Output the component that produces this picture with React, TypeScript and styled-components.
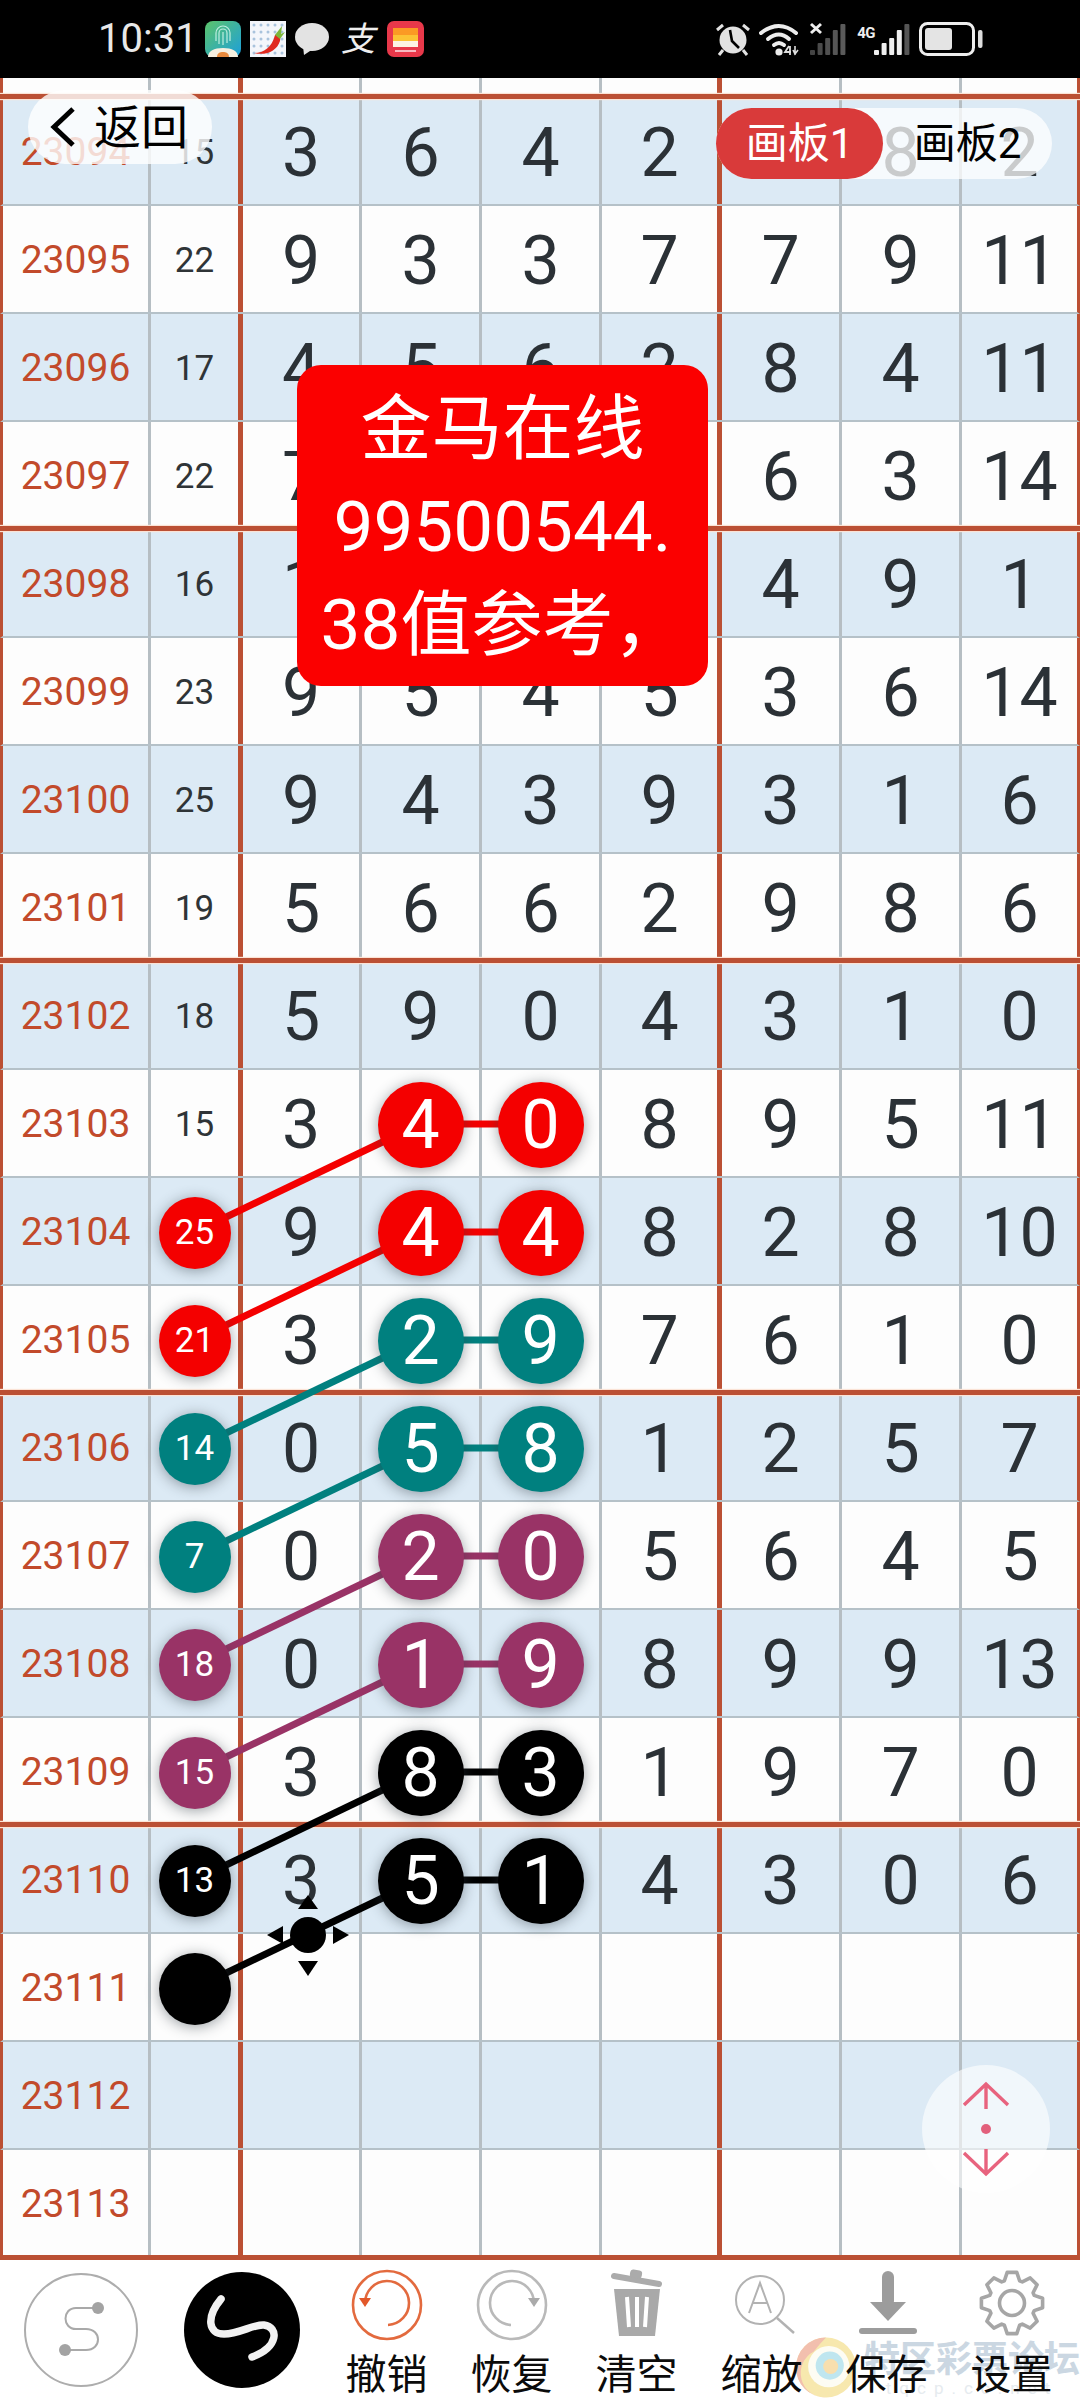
import React from 'react';
import styled, { createGlobalStyle } from 'styled-components';

const FONT = `Roboto, "Noto Sans CJK SC", sans-serif`;
const THICK = '#bb5034';
const THIN = '#b6bec3';
const TONES = { red: '#f40000', teal: '#00807f', purple: '#993366', black: '#000000' } as const;
type Tone = keyof typeof TONES;

const Global = createGlobalStyle`
  html, body { margin: 0; padding: 0; background: #fff; }
  body { font-family: ${FONT}; }
  * { box-sizing: border-box; }
`;

const Page = styled.div`
  position: relative;
  width: 1080px;
  height: 2400px;
  overflow: hidden;
  background: #fff;
`;

/* status bar */
const StatusBar = styled.div`
  height: 78px;
  background: #000;
  display: flex;
  align-items: center;
  padding: 0 97px 0 98px;
`;
const Time = styled.span`
  font-size: 40px;
  color: #e8e8e8;
  width: 107px;
  line-height: 1;
  white-space: nowrap;
`;
const NotifyGroup = styled.div`
  display: flex;
  align-items: center;
  gap: 9px;
`;
const SystemGroup = styled.div`
  display: flex;
  align-items: center;
  gap: 8px;
  margin-left: auto;
`;
const AliGlyph = styled.span`
  width: 36px;
  margin: 0 2px;
  font-size: 34px;
  line-height: 1;
  color: #eee;
  text-align: center;
  font-style: italic;
`;
const NetLabel = styled.span`
  align-self: flex-start;
  margin: 4px -10px 0 2px;
  font-size: 15px;
  font-weight: 700;
  line-height: 1;
  color: #eee;
  letter-spacing: -0.5px;
`;

/* grid */
const Board = styled.div`
  position: relative;
  width: 1080px;
`;
const Row = styled.div<{ $blue?: boolean; $thick?: boolean; $last?: boolean; $stub?: boolean }>`
  position: relative;
  display: grid;
  grid-template-columns: 148px 92px 119px 120px 120px 120px 120px 120px 115px;
  height: ${(p) => (p.$stub ? 20 : p.$last ? 110 : 108)}px;
  background: ${(p) => (p.$blue ? '#dceaf5' : '#fdfdfd')};
  border-left: 3px solid ${THICK};
  border-right: 3px solid ${THICK};
  border-bottom: ${(p) => (p.$last ? `5px solid ${THICK}` : p.$stub ? 'none' : `2px solid #b5c1c8`)};
  &::before {
    content: '';
    display: ${(p) => (p.$thick ? 'block' : 'none')};
    position: absolute;
    left: -3px;
    right: -3px;
    top: -4px;
    height: 5px;
    background: ${THICK};
    box-shadow: 0 1px 1px #fbe3d6, 0 -1px 1px #fbe3d6;
  }
`;
const Cell = styled.div<{ $edge?: 'thin' | 'thick' | 'none' }>`
  display: flex;
  align-items: center;
  justify-content: center;
  padding-top: 3px;
  min-width: 0;
  border-right: ${(p) =>
    p.$edge === 'thick' ? `5px solid ${THICK}` : p.$edge === 'none' ? 'none' : `3px solid ${THIN}`};
`;
const RowId = styled.span`
  font-size: 39px;
  line-height: 1;
  color: #c24a2b;
`;
const SumText = styled.span`
  font-size: 35px;
  line-height: 1;
  color: #2f3437;
`;
const Digit = styled.span`
  font-size: 68px;
  line-height: 1;
  color: #2b3136;
`;
const Ball = styled.span<{ $tone: Tone; $small?: boolean }>`
  position: relative;
  z-index: 2;
  flex: none;
  display: flex;
  align-items: center;
  justify-content: center;
  width: ${(p) => (p.$small ? 72 : 86)}px;
  height: ${(p) => (p.$small ? 72 : 86)}px;
  border-radius: 50%;
  background: ${(p) => TONES[p.$tone]};
  color: #fff;
  font-size: ${(p) => (p.$small ? 35 : 68)}px;
  line-height: 1;
  box-shadow: 0 2px 14px rgba(50, 60, 70, 0.48);
`;
const LinkLayer = styled.svg`
  position: absolute;
  left: 0;
  top: 0;
  z-index: 1;
  pointer-events: none;
`;

/* floating controls */
const BackPill = styled.div`
  position: absolute;
  left: 28px;
  top: 90px;
  width: 184px;
  height: 74px;
  z-index: 4;
  display: flex;
  align-items: center;
  gap: 18px;
  padding-left: 22px;
  border-radius: 37px;
  background: rgba(255, 255, 255, 0.8);
  color: #000;
  font-size: 47px;
  line-height: 1;
`;
const BoardTabs = styled.div`
  position: absolute;
  left: 716px;
  top: 108px;
  width: 336px;
  height: 71px;
  z-index: 4;
  display: flex;
  border-radius: 36px;
  background: rgba(255, 255, 255, 0.75);
`;
const BoardTab = styled.div<{ $active?: boolean }>`
  flex: ${(p) => (p.$active ? '0 0 167px' : '1')};
  display: flex;
  align-items: center;
  justify-content: center;
  border-radius: 36px;
  font-size: 42px;
  line-height: 1;
  color: ${(p) => (p.$active ? '#fff' : '#000')};
  background: ${(p) => (p.$active ? '#d93a3a' : 'transparent')};
`;
const NoteCard = styled.div`
  position: absolute;
  left: 297px;
  top: 365px;
  width: 411px;
  height: 321px;
  z-index: 5;
  display: flex;
  flex-direction: column;
  align-items: center;
  justify-content: center;
  padding-top: 3px;
  border-radius: 24px;
  background: #fb0000;
  color: #fff;
  font-size: 71px;
  line-height: 98px;
  white-space: nowrap;
`;
const ScrollKnob = styled.div`
  position: absolute;
  left: 922px;
  top: 2065px;
  width: 128px;
  height: 128px;
  z-index: 4;
  display: flex;
  align-items: center;
  justify-content: center;
  border-radius: 50%;
  background: rgba(255, 255, 255, 0.6);
`;

/* toolbar */
const Toolbar = styled.div`
  height: 140px;
  background: #fff;
  display: flex;
  align-items: flex-start;
  padding-left: 24px;
`;
const RoundButton = styled.div<{ $dark?: boolean }>`
  flex: none;
  align-self: center;
  width: ${(p) => (p.$dark ? 116 : 114)}px;
  height: ${(p) => (p.$dark ? 116 : 114)}px;
  margin-left: ${(p) => (p.$dark ? 46 : 0)}px;
  margin-right: ${(p) => (p.$dark ? 24 : 0)}px;
  border-radius: 50%;
  background: ${(p) => (p.$dark ? '#000' : 'transparent')};
  border: ${(p) => (p.$dark ? 'none' : '2px solid #adadad')};
`;
const ToolItem = styled.div`
  position: relative;
  z-index: 2;
  flex: none;
  width: 125px;
  display: flex;
  flex-direction: column;
  align-items: center;
  gap: 9px;
  padding-top: 5px;
`;
const ToolIcon = styled.svg`
  display: block;
  width: 80px;
  height: 80px;
`;
const ToolLabel = styled.span`
  font-size: 41px;
  line-height: 42px;
  color: #0b0b0b;
`;
const Watermark = styled.div`
  position: absolute;
  left: 795px;
  top: 2335px;
  width: 285px;
  height: 65px;
  z-index: 1;
  display: flex;
  overflow: hidden;
`;
const WatermarkText = styled.div`
  margin-left: 7px;
  padding-top: 6px;
  white-space: nowrap;
  display: flex;
  flex-direction: column;
  align-items: center;
`;
const WatermarkTitle = styled.span`
  font-size: 36px;
  line-height: 38px;
  font-weight: 700;
  color: #cbd7e2;
`;
const WatermarkUrl = styled.span`
  font-size: 17px;
  line-height: 18px;
  letter-spacing: 8px;
  color: #e6ebef;
`;

type RowData = {
  id: number;
  sum?: number;
  sumTone?: Tone;
  tone?: Tone;
  nums?: number[];
};

const ROWS: RowData[] = [
  { id: 23094, sum: 15, nums: [3, 6, 4, 2, 7, 8, 2] },
  { id: 23095, sum: 22, nums: [9, 3, 3, 7, 7, 9, 11] },
  { id: 23096, sum: 17, nums: [4, 5, 6, 2, 8, 4, 11] },
  { id: 23097, sum: 22, nums: [7, 4, 6, 5, 6, 3, 14] },
  { id: 23098, sum: 16, nums: [1, 7, 3, 5, 4, 9, 1] },
  { id: 23099, sum: 23, nums: [9, 5, 4, 5, 3, 6, 14] },
  { id: 23100, sum: 25, nums: [9, 4, 3, 9, 3, 1, 6] },
  { id: 23101, sum: 19, nums: [5, 6, 6, 2, 9, 8, 6] },
  { id: 23102, sum: 18, nums: [5, 9, 0, 4, 3, 1, 0] },
  { id: 23103, sum: 15, tone: 'red', nums: [3, 4, 0, 8, 9, 5, 11] },
  { id: 23104, sum: 25, sumTone: 'red', tone: 'red', nums: [9, 4, 4, 8, 2, 8, 10] },
  { id: 23105, sum: 21, sumTone: 'red', tone: 'teal', nums: [3, 2, 9, 7, 6, 1, 0] },
  { id: 23106, sum: 14, sumTone: 'teal', tone: 'teal', nums: [0, 5, 8, 1, 2, 5, 7] },
  { id: 23107, sum: 7, sumTone: 'teal', tone: 'purple', nums: [0, 2, 0, 5, 6, 4, 5] },
  { id: 23108, sum: 18, sumTone: 'purple', tone: 'purple', nums: [0, 1, 9, 8, 9, 9, 13] },
  { id: 23109, sum: 15, sumTone: 'purple', tone: 'black', nums: [3, 8, 3, 1, 9, 7, 0] },
  { id: 23110, sum: 13, sumTone: 'black', tone: 'black', nums: [3, 5, 1, 4, 3, 0, 6] },
  { id: 23111, sumTone: 'black' },
  { id: 23112 },
  { id: 23113 },
];

const rowY = (i: number) => 20 + 108 * i + 54;
const SUM_X = 195;
const FIRST_X = 420;
const SECOND_X = 541;

function gearPath(cx: number, cy: number, outer: number, root: number, teeth: number) {
  const pts: string[] = [];
  const step = (Math.PI * 2) / teeth;
  for (let k = 0; k < teeth; k++) {
    const a = k * step - Math.PI / 2;
    const seq: [number, number][] = [
      [root, a - step * 0.42],
      [outer, a - step * 0.2],
      [outer, a + step * 0.2],
      [root, a + step * 0.42],
    ];
    seq.forEach(([r, t]) => {
      pts.push(`${(cx + r * Math.cos(t)).toFixed(1)} ${(cy + r * Math.sin(t)).toFixed(1)}`);
    });
  }
  return `M${pts.join('L')}Z`;
}

const FingerprintApp = () => (
  <svg width="36" height="36" viewBox="0 0 36 36">
    <defs>
      <linearGradient id="fpa" x1="0" y1="0" x2="1" y2="1">
        <stop offset="0" stopColor="#5cc46a" />
        <stop offset="1" stopColor="#1c9fdc" />
      </linearGradient>
    </defs>
    <rect width="36" height="36" rx="8" fill="url(#fpa)" />
    <g fill="none" stroke="#bfeee0" strokeWidth="1.2">
      <path d="M11 20V12a7 7 0 0 1 14 0v8" />
      <path d="M14 23V12a4 4 0 0 1 8 0v10" />
      <path d="M18 11v13" />
    </g>
    <path d="M3 36c0-6 6-9 15-9s15 3 15 9z" fill="#f6efe0" />
    <path d="M12 36c0-4 3-5 6-5s6 1 6 5z" fill="#e8893c" />
  </svg>
);

const ChiliApp = () => (
  <svg width="36" height="36" viewBox="0 0 36 36">
    <rect width="36" height="36" fill="#f4f6fb" />
    {[4, 11, 18, 25, 32].map((x) =>
      [4, 11, 18, 25, 32].map((y) => <circle key={`${x}-${y}`} cx={x} cy={y} r="1.5" fill="#a9c3dd" />),
    )}
    <path d="M4 32c10 0 18-6 21-18 3-1 6 2 5 6-3 10-14 15-26 12z" fill="#e0291f" />
    <path d="M25 14l7-9-1 8 4-2-5 7z" fill="#7db63a" />
  </svg>
);

const ChatBubble = () => (
  <svg width="34" height="34" viewBox="0 0 34 34">
    <ellipse cx="17" cy="15" rx="17" ry="14" fill="#e3e3e3" />
    <path d="M8 24l1 9 9-6z" fill="#e3e3e3" />
  </svg>
);

const HuaweiApp = () => (
  <svg width="37" height="36" viewBox="0 0 37 36">
    <rect width="37" height="36" rx="7" fill="#e8384a" />
    <rect x="6" y="7" width="25" height="7" fill="#fb9a24" />
    <rect x="6" y="14" width="25" height="6" fill="#fcc334" />
    <rect x="6" y="20" width="25" height="6" fill="#fdf3e4" />
    <rect x="8" y="29" width="21" height="2" fill="#f8b9c0" />
  </svg>
);

const AlarmIcon = () => (
  <svg width="36" height="34" viewBox="0 0 36 34">
    <circle cx="18" cy="18" r="13.5" fill="#e2e2e2" />
    <path d="M15 8l2 11 7 7" fill="none" stroke="#000" strokeWidth="2.6" />
    <path d="M2 8l6-5M28 3l6 5M8 28l-4 5M28 28l4 5" stroke="#e2e2e2" strokeWidth="3" fill="none" />
  </svg>
);

const WifiIcon = () => (
  <svg width="42" height="34" viewBox="0 0 42 34">
    <g fill="none" stroke="#ececec" strokeWidth="4" strokeLinecap="round">
      <path d="M2 11Q20 -3 37 11" />
      <path d="M9 17Q20 8 30 17" />
      <path d="M15 23Q20 19 25 23" />
    </g>
    <circle cx="20" cy="30" r="3.6" fill="#ececec" />
    <path d="M30 24l-4 6h6M31 24v9" fill="none" stroke="#ddd" strokeWidth="1.8" />
    <path d="M36 24v9M39 28l-3 4-2-4" fill="none" stroke="#ddd" strokeWidth="1.6" />
  </svg>
);

const BAR_HEIGHTS = [5, 12, 17, 25, 31];

const SignalIcon = ({ colors, cross }: { colors: string[]; cross?: boolean }) => (
  <svg width="38" height="34" viewBox="0 0 38 34">
    {BAR_HEIGHTS.map((h, i) => (
      <rect key={h} x={1 + i * 7.6} y={33 - h} width="5" height={h} rx="1" fill={colors[i]} />
    ))}
    {cross && <path d="M2 2l10 9M12 2L2 11" stroke="#eee" strokeWidth="3" />}
  </svg>
);

const BatteryIcon = () => (
  <svg width="64" height="34" viewBox="0 0 64 34">
    <rect x="1.5" y="1.5" width="53" height="31" rx="7" fill="none" stroke="#eee" strokeWidth="3" />
    <rect x="6" y="6" width="27" height="22" rx="3" fill="#e4e4e4" />
    <rect x="59" y="8" width="4.5" height="18" rx="2" fill="#ddd" />
  </svg>
);

export default function App() {
  const balls = ROWS.map((r, i) => ({ r, i }));
  return (
    <Page>
      <Global />
      <StatusBar>
        <Time>10:31</Time>
        <NotifyGroup>
          <FingerprintApp />
          <ChiliApp />
          <ChatBubble />
          <AliGlyph>支</AliGlyph>
          <HuaweiApp />
        </NotifyGroup>
        <SystemGroup>
          <AlarmIcon />
          <WifiIcon />
          <SignalIcon colors={['#444', '#4a4a4a', '#505050', '#555', '#5a5a5a']} cross />
          <NetLabel>4G</NetLabel>
          <SignalIcon colors={['#eee', '#eee', '#eee', '#eee', '#555']} />
          <BatteryIcon />
        </SystemGroup>
      </StatusBar>

      <Board>
        <Row $stub>
          {[0, 1, 2, 3, 4, 5, 6, 7, 8].map((c) => (
            <Cell key={c} $edge={c === 1 || c === 5 ? 'thick' : c === 8 ? 'none' : 'thin'} />
          ))}
        </Row>
        {ROWS.map((r, i) => (
          <Row key={r.id} $blue={i % 2 === 0} $thick={i % 4 === 0} $last={i === ROWS.length - 1}>
            <Cell>
              <RowId>{r.id}</RowId>
            </Cell>
            <Cell $edge="thick">
              {r.sumTone ? (
                <Ball $tone={r.sumTone} $small>
                  {r.sum}
                </Ball>
              ) : (
                <SumText>{r.sum}</SumText>
              )}
            </Cell>
            {[0, 1, 2, 3, 4, 5, 6].map((c) => {
              const v = r.nums ? r.nums[c] : undefined;
              const isBall = r.tone && (c === 1 || c === 2);
              return (
                <Cell key={c} $edge={c === 3 ? 'thick' : c === 6 ? 'none' : 'thin'}>
                  {isBall ? <Ball $tone={r.tone as Tone}>{v}</Ball> : <Digit>{v}</Digit>}
                </Cell>
              );
            })}
          </Row>
        ))}
        <LinkLayer width="1080" height="2182" viewBox="0 0 1080 2182">
          {balls.map(({ r, i }) => (
            <g key={r.id}>
              {r.tone && (
                <line
                  x1={FIRST_X}
                  y1={rowY(i)}
                  x2={SECOND_X}
                  y2={rowY(i)}
                  stroke={TONES[r.tone]}
                  strokeWidth="7"
                />
              )}
              {r.sumTone && (
                <line
                  x1={SUM_X}
                  y1={rowY(i)}
                  x2={FIRST_X}
                  y2={rowY(i - 1)}
                  stroke={TONES[r.sumTone]}
                  strokeWidth="7"
                />
              )}
            </g>
          ))}
          <g transform="translate(0 -78)">
            <circle cx="308" cy="1935" r="18" fill="#000" />
            <polygon points="298,1909 318,1909 308,1895" fill="#000" />
            <polygon points="298,1961 318,1961 308,1976" fill="#000" />
            <polygon points="283,1926 283,1944 267,1935" fill="#000" />
            <polygon points="333,1926 333,1944 349,1935" fill="#000" />
          </g>
        </LinkLayer>
      </Board>

      <Toolbar>
        <RoundButton>
          <svg width="110" height="110" viewBox="0 0 110 110">
            <path d="M72 33H50C36 33 36 54 50 54H60C76 54 76 75 60 75H39" fill="none" stroke="#a9a9a9" strokeWidth="2" />
            <circle cx="72" cy="33" r="6" fill="#a3a3a3" />
            <circle cx="39" cy="75" r="6" fill="#a3a3a3" />
          </svg>
        </RoundButton>
        <RoundButton $dark>
          <svg width="116" height="116" viewBox="0 0 116 116">
            <path
              d="M37 27C22 45 24 62 40 62C55 62 70 52 80 53C95 55 95 75 68 85"
              fill="none"
              stroke="#f2f2f2"
              strokeWidth="7.5"
              strokeLinecap="round"
            />
          </svg>
        </RoundButton>
        <ToolItem>
          <ToolIcon viewBox="0 0 80 80">
            <circle cx="40" cy="40" r="34" fill="none" stroke="#e36a3e" strokeWidth="2.6" />
            <path d="M18 38A22 22 0 1 1 41 60" fill="none" stroke="#e36a3e" strokeWidth="2.6" />
            <path d="M12 33L18 42L24 33Z" fill="#e2582a" />
          </ToolIcon>
          <ToolLabel>撤销</ToolLabel>
        </ToolItem>
        <ToolItem>
          <ToolIcon viewBox="0 0 80 80">
            <circle cx="40" cy="40" r="34" fill="none" stroke="#b9b9b9" strokeWidth="2.6" />
            <path d="M62 38A22 22 0 1 0 39 60" fill="none" stroke="#b9b9b9" strokeWidth="2.6" />
            <path d="M56 33L62 42L68 33Z" fill="#aaa" />
          </ToolIcon>
          <ToolLabel>恢复</ToolLabel>
        </ToolItem>
        <ToolItem>
          <ToolIcon viewBox="0 0 80 80">
            <path d="M17 11L62 19" stroke="#ababab" strokeWidth="6" strokeLinecap="round" />
            <rect x="33" y="5" width="12" height="8" rx="3" fill="#ababab" transform="rotate(10 39 9)" />
            <path d="M17 24H63L58 71H22Z" fill="#a9a9a9" />
            <path d="M30 32L32 62M40 32V62M50 32L48 62" stroke="#fff" strokeWidth="4" />
          </ToolIcon>
          <ToolLabel>清空</ToolLabel>
        </ToolItem>
        <ToolItem>
          <ToolIcon viewBox="0 0 80 80">
            <circle cx="38" cy="35" r="24" fill="none" stroke="#b2b2b2" strokeWidth="2" />
            <path d="M27 48L38 18L49 48M31 38H45" fill="none" stroke="#b2b2b2" strokeWidth="2" />
            <path d="M55 53L72 68" stroke="#b2b2b2" strokeWidth="2.4" />
          </ToolIcon>
          <ToolLabel>缩放</ToolLabel>
        </ToolItem>
        <ToolItem>
          <ToolIcon viewBox="0 0 80 80">
            <path d="M41 12V36" stroke="#9c9c9c" strokeWidth="12" strokeLinecap="round" />
            <path d="M23 37H59L41 56Z" fill="#9c9c9c" />
            <rect x="12" y="63" width="58" height="6" rx="3" fill="#9c9c9c" />
          </ToolIcon>
          <ToolLabel>保存</ToolLabel>
        </ToolItem>
        <ToolItem>
          <ToolIcon viewBox="0 0 80 80">
            <path
              d={gearPath(40, 38, 31, 23.5, 8)}
              fill="none"
              stroke="#a6a6a6"
              strokeWidth="3.6"
              strokeLinejoin="round"
            />
            <circle cx="40" cy="38" r="12.5" fill="none" stroke="#a6a6a6" strokeWidth="3.6" />
          </ToolIcon>
          <ToolLabel>设置</ToolLabel>
        </ToolItem>
      </Toolbar>

      <BackPill>
        <svg width="26" height="42" viewBox="0 0 26 42">
          <path d="M23 3L4 21L23 39" fill="none" stroke="#000" strokeWidth="5" />
        </svg>
        <span>返回</span>
      </BackPill>

      <BoardTabs>
        <BoardTab $active>画板1</BoardTab>
        <BoardTab>画板2</BoardTab>
      </BoardTabs>

      <NoteCard>
        <span>金马在线</span>
        <span>99500544.</span>
        <span>38值参考，</span>
      </NoteCard>

      <ScrollKnob>
        <svg width="60" height="96" viewBox="0 0 60 96">
          <path d="M8 24L30 3L52 24M30 3V28M8 72L30 93L52 72M30 93V68" fill="none" stroke="#e8637e" strokeWidth="3.4" />
          <circle cx="30" cy="48" r="5" fill="#e2607c" />
        </svg>
      </ScrollKnob>

      <Watermark>
        <svg width="66" height="65" viewBox="0 0 66 66">
          <circle cx="33" cy="33" r="32" fill="#f7e8ae" />
          <path d="M33 1A32 32 0 0 0 33 65A26 26 0 0 1 20 16Q26 8 33 1Z" fill="#f2bfae" />
          <circle cx="36" cy="32" r="22" fill="#fdfcf3" />
          <circle cx="37" cy="31" r="15" fill="#bfe6ef" />
          <circle cx="38" cy="32" r="8" fill="#f8dfae" />
        </svg>
        <WatermarkText>
          <WatermarkTitle>特区彩票论坛</WatermarkTitle>
          <WatermarkUrl>tqcp.cc.net</WatermarkUrl>
        </WatermarkText>
      </Watermark>
    </Page>
  );
}
